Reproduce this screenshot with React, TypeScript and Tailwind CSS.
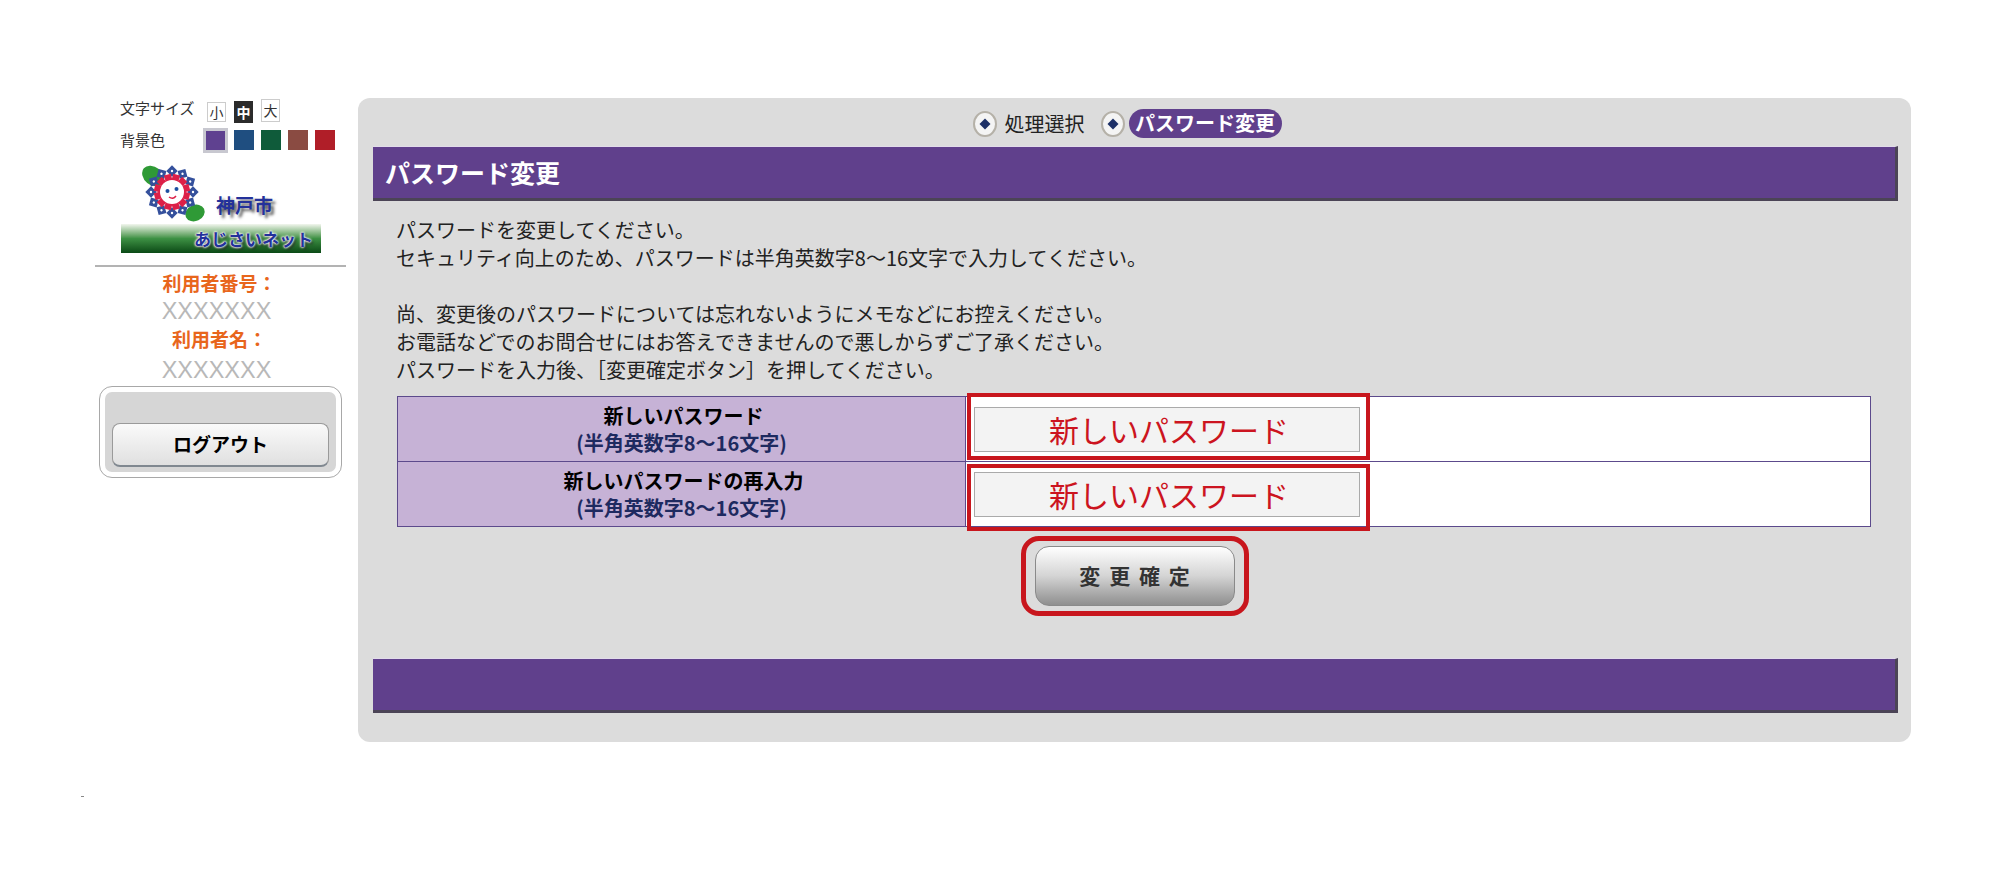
import React from 'react';

const font = { fontFamily: '"Noto Sans CJK JP", "Liberation Sans", sans-serif' };
const latin = { fontFamily: '"Liberation Sans", sans-serif' };

const swatches = ['bg-[#1f4e80]', 'bg-[#0f5b3a]', 'bg-[#8a4b42]', 'bg-[#b01e28]'];

// あじさい flower mark from the logo
const FlowerLogo = () => {
  const outer = Array.from({ length: 12 }, (_, i) => (i * 360) / 12);
  const inner = Array.from({ length: 12 }, (_, i) => 15 + (i * 360) / 12);
  return (
    <svg width="70" height="66" viewBox="0 0 70 66">
      <ellipse cx="15" cy="13" rx="12" ry="9" fill="#2f9a36" transform="rotate(40 15 13)" />
      <ellipse cx="57" cy="50" rx="10" ry="8" fill="#2f9a36" transform="rotate(-25 57 50)" />
      {outer.map((a) => (
        <g key={a} transform={`rotate(${a} 34 29)`}>
          <rect x="30" y="4" width="8" height="8" fill="#34509c" transform="rotate(45 34 8)" />
          <circle cx="34" cy="8" r="1.2" fill="#ffffff" />
        </g>
      ))}
      {inner.map((a) => (
        <rect key={a} x="30.5" y="11" width="7" height="7" fill="#dc2048" transform={`rotate(${a} 34 29)`} />
      ))}
      <circle cx="34" cy="29" r="12" fill="#ffffff" />
      <circle cx="29.5" cy="28" r="2" fill="#1d4fa0" />
      <circle cx="38.5" cy="26" r="2" fill="#1d4fa0" />
      <path d="M31 34 Q35 37 38 33" stroke="#dc2048" strokeWidth="1.5" fill="none" />
    </svg>
  );
};

const StepIcon = () => (
  <svg width="24" height="26" viewBox="0 0 24 26" className="shrink-0">
    <ellipse cx="12" cy="13" rx="11" ry="12" fill="#f4f4f4" stroke="#b5b1a8" strokeWidth="2" />
    <path d="M12 7.5 L17.5 13 L12 18.5 L6.5 13z" fill="#1c2f66" />
  </svg>
);

const PurpleBar = ({ children }: { children?: React.ReactNode }) => (
  <div className="h-[55px] flex items-center pl-3 bg-[#60408c] border-t border-t-[#e2dcea] border-r-[3px] border-r-[#4b4456] border-b-[3px] border-b-[#4b4456]">
    {children}
  </div>
);

const PasswordRow = ({ label, box, last }: { label: string; box: string; last?: boolean }) => (
  <div className={`grid grid-cols-[568px_1fr] ${last ? 'h-[64px]' : 'h-[65px] border-b border-[#5c4a8c]'}`}>
    <div className="bg-[#c6b2d6] border-r border-[#5c4a8c] flex flex-col items-center justify-center font-bold text-[20px] leading-[27px]">
      <span className="text-black pl-[4px]">{label}</span>
      <span className="text-[#1e2a60]">(半角英数字8～16文字)</span>
    </div>
    <div className="relative bg-white flex items-center pl-[8px]">
      <input
        readOnly
        placeholder="新しいパスワード"
        className="w-[386px] h-[45px] pl-[4px] bg-[#f3f3f3] border border-[#aaaaaa] text-center text-[30px] placeholder-[#cc1420] outline-none"
        style={font}
      />
      {/* red annotation over the field */}
      <div className={`absolute left-[1px] w-[403px] h-[67px] border-4 border-[#c8161d] pointer-events-none ${box}`} />
    </div>
  </div>
);

export default function App() {
  return (
    <div className="relative w-[2000px] h-[886px] bg-white flex pt-[98px] pl-[95px] overflow-hidden" style={font}>
      {/* Sidebar */}
      <aside className="w-[251px] mr-[12px] shrink-0 flex flex-col">
        <div className="flex items-center h-[26px] pl-[25px] text-[15px] text-[#333]">
          <span className="w-[87px] leading-none -mt-[7px]">文字サイズ</span>
          <span className="w-[19px] h-[20px] mt-[2px] border border-[#ccc] text-[14px] leading-[18px] text-center">小</span>
          <span className="w-[19px] h-[22px] mt-[2px] ml-[8px] bg-[#2b2b2b] text-white text-[14px] font-bold leading-[22px] text-center">中</span>
          <span className="w-[19px] h-[23px] -mt-[2px] ml-[8px] border border-[#ccc] text-[14px] leading-[21px] text-center">大</span>
        </div>
        <div className="flex items-center h-[31px] pl-[25px] text-[15px] text-[#333]">
          <span className="w-[83px] leading-none">背景色</span>
          <span className="w-[25px] h-[25px] border-[3px] border-[#c8c8d0] bg-[#5f4190] mt-[2px]" />
          <div className="flex gap-[7px] ml-[6px]">
            {swatches.map((c) => (
              <span key={c} className={`w-[20px] h-[20px] ${c}`} />
            ))}
          </div>
        </div>

        {/* Logo */}
        <div className="h-[98px] relative ml-[26px] w-[200px] flex flex-col justify-end">
          <div className="absolute left-[17px] top-[8px]">
            <FlowerLogo />
          </div>
          <span className="absolute left-[95px] top-[38px] text-[19px] font-bold text-[#23319a] leading-[24px] [text-shadow:3px_3px_3px_#555]">
            神戸市
          </span>
          <div className="h-[29px] bg-gradient-to-b from-[#f2f6ee] via-[#3d9144] to-[#0a4a16] flex items-center justify-end pr-[8px]">
            <span className="text-[17px] font-bold text-[#23319a] leading-none [text-shadow:0_0_2px_#fff,0_0_2px_#fff,0_0_3px_#fff,2px_2px_3px_#222]">
              あじさいネット
            </span>
          </div>
        </div>

        <div className="h-[2px] bg-[#b3b3b3] mt-[12px]" />

        <div className="flex flex-col items-center text-center">
          <span className="text-[19px] font-bold text-[#e8661c] leading-[29px] mt-[1px] -ml-[2px]">利用者番号：</span>
          <span className="text-[23.5px] text-[#b8b8b8] leading-[29px] -ml-[8px]" style={latin}>XXXXXXX</span>
          <span className="text-[19px] font-bold text-[#e8661c] leading-[25px] -ml-[2px]">利用者名：</span>
          <span className="text-[23.5px] text-[#b8b8b8] leading-[32px] mt-[3px] -ml-[8px]" style={latin}>XXXXXXX</span>
        </div>

        <div className="mt-[1px] ml-[5px] w-[241px] h-[90px] rounded-[12px] bg-[#d6d6d6] border-[5px] border-white outline outline-1 outline-[#a8a8a8] px-[7px] pt-[31px]">
          <button className="w-full h-[44px] rounded-[8px] bg-gradient-to-b from-[#fafafa] to-[#e0e0e0] border border-[#9a9a9a] border-b-2 border-b-[#808890] text-[19px] font-bold text-black">
            ログアウト
          </button>
        </div>
      </aside>

      {/* Main panel */}
      <main className="w-[1553px] h-[644px] bg-[#dcdcdc] rounded-[12px] pl-[15px] pr-[13px] flex flex-col">
        <nav className="h-[48px] flex items-center justify-center pt-[3px] pr-[17px] text-[20px] text-[#222]">
          <StepIcon />
          <span className="ml-[8px] w-[96px] leading-none">処理選択</span>
          <StepIcon />
          <span className="ml-[4px] h-[29px] w-[153px] rounded-full bg-[#60408c] text-white font-bold leading-[28px] text-center">
            パスワード変更
          </span>
        </nav>

        <PurpleBar>
          <h2 className="text-[25px] font-bold text-white leading-none">パスワード変更</h2>
        </PurpleBar>

        <div className="pt-[15px] pl-[23px] text-[20px] leading-[28px] text-[#222]">
          <p>パスワードを変更してください。</p>
          <p>セキュリティ向上のため、パスワードは半角英数字8～16文字で入力してください。</p>
          <p>&nbsp;</p>
          <p>尚、変更後のパスワードについては忘れないようにメモなどにお控えください。</p>
          <p>お電話などでのお問合せにはお答えできませんので悪しからずご了承ください。</p>
          <p>パスワードを入力後、［変更確定ボタン］を押してください。</p>
        </div>

        <div className="mt-[12px] ml-[24px] w-[1474px] border border-[#5c4a8c]">
          <PasswordRow label="新しいパスワード" box="top-[-4px]" />
          <PasswordRow label="新しいパスワードの再入力" box="top-[2px]" last />
        </div>

        <div className="mt-[9px] flex justify-center">
          <div className="w-[228px] h-[80px] rounded-[18px] border-[5px] border-[#c8161d] flex items-center justify-center -ml-[2px]">
            <button className="w-[200px] h-[60px] rounded-[14px] border border-[#8a8a8a] bg-gradient-to-b from-white via-[#d4d4d4] to-[#8f8f8f] text-[21px] font-bold text-[#333] tracking-[0.42em] pl-[9px]">
              変更確定
            </button>
          </div>
        </div>

        <div className="mt-[42px]">
          <PurpleBar />
        </div>
      </main>

      <span className="absolute left-[81px] top-[796px] w-[3px] h-[1px] bg-[#888]" />
    </div>
  );
}
